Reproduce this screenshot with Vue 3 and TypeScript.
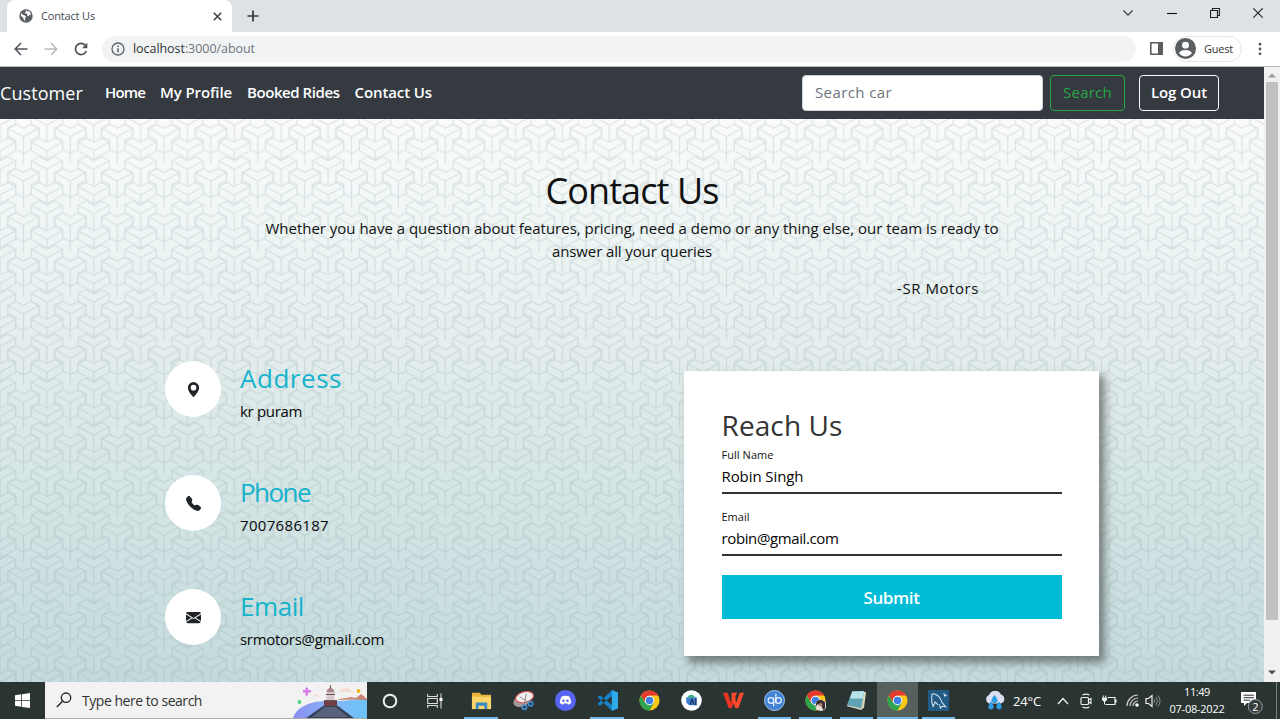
<script setup lang="ts">
import type { Directive } from 'vue'

interface ContactItem {
  title: string
  text: string
  icon: 'pin' | 'phone' | 'mail'
  titleWidth: number
  textWidth: number
}

interface Field {
  label: string
  value: string
  labelWidth: number
  valueWidth: number
}

interface NavLink {
  text: string
  width: number
}

interface TaskApp {
  id: string
  open?: boolean
  active?: boolean
}

// Tracks a label out to its design width, whichever font family is available.
const vFit: Directive<HTMLElement, number> = {
  mounted(el, binding) {
    const natural = el.getBoundingClientRect().width
    const count = (el.textContent ?? '').trim().length
    if (count > 0) el.style.letterSpacing = `${(binding.value - natural) / count}px`
  },
}

const links: NavLink[] = [
  { text: 'Home', width: 40 },
  { text: 'My Profile', width: 72 },
  { text: 'Booked Rides', width: 92.5 },
  { text: 'Contact Us', width: 77.5 },
]

const contacts: ContactItem[] = [
  { title: 'Address', text: 'kr puram', icon: 'pin', titleWidth: 102, textWidth: 62 },
  { title: 'Phone', text: '7007686187', icon: 'phone', titleWidth: 70, textWidth: 89 },
  { title: 'Email', text: 'srmotors@gmail.com', icon: 'mail', titleWidth: 64, textWidth: 144 },
]

const fields: Field[] = [
  { label: 'Full Name', value: 'Robin Singh', labelWidth: 52, valueWidth: 82 },
  { label: 'Email', value: 'robin@gmail.com', labelWidth: 28, valueWidth: 117 },
]

const apps: TaskApp[] = [
  { id: 'explorer', open: true },
  { id: 'snip' },
  { id: 'discord' },
  { id: 'vscode', open: true },
  { id: 'chrome' },
  { id: 'studio' },
  { id: 'wps' },
  { id: 'qb', open: true },
  { id: 'chrome-user', open: true },
  { id: 'notepad', open: true },
  { id: 'chrome', open: true, active: true },
  { id: 'mysql', open: true },
]
</script>

<template>
  <div class="window">
    <header class="tabs">
      <div class="tab">
        <svg class="globe" viewBox="0 0 14 14">
          <circle cx="7" cy="7" r="6.7" fill="#5b5f64" />
          <path d="M2 4.2 4.4 6l1.4.4 1.4 1.3-1.2 1.5.2 2.6-1.4-.9-.5-2L1.8 6.800zM7 1.400l4 1.300.9 3-1.500.3-.6 1.300-1.700-.6L8.600 5.300 7.200 4.600 5.800 4.800z" fill="#fff" />
        </svg>
        <span v-fit="54" class="tab-title">Contact Us</span>
        <svg class="close" viewBox="0 0 8 8"><path d="M.7.7 7.300 7.300M7.300.7.7 7.300" stroke="#3f4347" stroke-width="1.400" /></svg>
      </div>
      <svg class="plus" viewBox="0 0 12 12"><path d="M6 .5v11M.5 6h11" stroke="#33373b" stroke-width="1.700" /></svg>
      <div class="controls">
        <svg width="12" height="8" viewBox="0 0 12 8"><path d="M1.500 1.500 6 6.200l4.500-4.700" fill="none" stroke="#333" stroke-width="1.100" /></svg>
        <svg width="10" height="10" viewBox="0 0 10 10"><path d="M0 5.500h10" stroke="#111" stroke-width="1.100" /></svg>
        <svg width="10" height="10" viewBox="0 0 10 10"><path d="M.5 2.500h7v7h-7zM2.500 2.300V.5h7v7H7.700" fill="none" stroke="#222" stroke-width="1.200" /></svg>
        <svg width="10" height="10" viewBox="0 0 10 10"><path d="m.3.3 9.400 9.400M9.700.3.3 9.700" stroke="#222" stroke-width="1.100" /></svg>
      </div>
    </header>

    <div class="toolbar">
      <svg class="nav-icon" viewBox="0 0 14 14"><path d="M13.500 7H1.500M7 1 1.200 7 7 13" fill="none" stroke="#505459" stroke-width="1.600" /></svg>
      <svg class="nav-icon" viewBox="0 0 14 14"><path d="M.5 7h12M7 1l5.800 6L7 13" fill="none" stroke="#b9bbbe" stroke-width="1.600" /></svg>
      <svg class="nav-icon" viewBox="0 0 14 14">
        <path d="M12.300 9A5.600 5.600 0 1 1 11.300 3.300L12.600 5" fill="none" stroke="#505459" stroke-width="1.700" />
        <path d="M13.300.8v5.400H8z" fill="#505459" />
      </svg>
      <div class="address">
        <svg class="info" viewBox="0 0 14 14"><circle cx="7" cy="7" r="6" fill="none" stroke="#5f6368" stroke-width="1.300" /><path d="M7 6.200v4.200M7 3.500v1.500" stroke="#5f6368" stroke-width="1.500" /></svg>
        <span v-fit="122"><b>localhost</b>:3000/about</span>
      </div>
      <svg class="panel" viewBox="0 0 13 13"><path d="M.8.8h11.400v11.400H.8z" fill="none" stroke="#5a5d61" stroke-width="1.600" /><path d="M8 0h5v13H8z" fill="#5a5d61" /></svg>
      <div class="guest">
        <svg viewBox="0 0 20 20"><circle cx="10" cy="10" r="10" fill="#5a5d62" /><circle cx="10" cy="6.800" r="3.300" fill="#fff" /><path d="M3.800 14.300Q5.500 11.500 10 11.500t6.200 2.800Q14 17.500 10 17.500t-6.200-3.200z" fill="#fff" /></svg>
        <span v-fit="29">Guest</span>
      </div>
      <svg class="dots" viewBox="0 0 4 14"><circle cx="2" cy="2.200" r="1.400" /><circle cx="2" cy="7" r="1.400" /><circle cx="2" cy="11.800" r="1.400" /></svg>
    </div>

    <div class="viewport">
      <div class="page">
        <nav class="navbar">
          <span v-fit="83" class="brand">Customer</span>
          <a v-for="link in links" :key="link.text" v-fit="link.width" class="link">{{ link.text }}</a>
          <div class="search-box"><span v-fit="77">Search car</span></div>
          <button class="btn search"><span v-fit="49">Search</span></button>
          <button class="btn logout"><span v-fit="56">Log Out</span></button>
        </nav>

        <main class="content">
          <svg class="pattern" aria-hidden="true">
            <defs>
              <!-- Long block: three arms meeting at the origin; short block: the same top on a stub. -->
              <g id="top-face">
                <path d="M0 0-15.600-8.500-7.800-12.600 0-8.500 7.800-12.600 15.600-8.500z" />
              </g>
              <g id="long-block">
                <use href="#top-face" />
                <path d="M-15.600-8.500V-.5L-7.800 3.700V14M15.600-8.500V-.5L7.800 3.700V14M0 0V17" />
              </g>
              <g id="short-block">
                <use href="#top-face" />
                <path d="M-15.600-8.500V0L0 8.800 15.600 0V-8.500M0 0V8.800" />
              </g>
              <pattern id="blocks" width="46.870" height="44.300" patternUnits="userSpaceOnUse">
                <g class="lines">
                  <use href="#long-block" x="23.430" y="17.700" />
                  <path d="M23.430 34.300V49M15.630 30.300l7.800 4 7.800-4" />
                  <use href="#long-block" x="23.430" y="62" />
                  <use href="#long-block" x="0" y="6" />
                  <use href="#long-block" x="46.870" y="6" />
                  <use href="#long-block" x="0" y="50.300" />
                  <use href="#long-block" x="46.870" y="50.300" />
                  <use href="#short-block" x="0" y="31.700" />
                  <use href="#short-block" x="46.870" y="31.700" />
                </g>
              </pattern>
            </defs>
            <rect width="100%" height="100%" fill="url(#blocks)" />
          </svg>

          <section class="intro">
            <h1><span v-fit="173">Contact Us</span></h1>
            <p><span v-fit="733">Whether you have a question about features, pricing, need a demo or any thing else, our team is ready to</span></p>
            <p><span v-fit="160">answer all your queries</span></p>
            <p class="sign"><span v-fit="82">-SR Motors</span></p>
          </section>

          <section class="columns">
            <ul class="contacts">
              <li v-for="item in contacts" :key="item.title">
                <span class="disc">
                  <svg v-if="item.icon === 'pin'" viewBox="0 0 16 16"><path fill-rule="evenodd" d="M8 16s6-5.686 6-10A6 6 0 0 0 2 6c0 4.314 6 10 6 10zm0-7a3 3 0 1 1 0-6 3 3 0 0 1 0 6z" /></svg>
                  <svg v-else-if="item.icon === 'phone'" viewBox="0 0 16 16"><path d="M1.885.511a1.745 1.745 0 0 1 2.610.163L6.290 2.980c.329.423.445.974.315 1.494l-.547 2.190a.678.678 0 0 0 .178.643l2.457 2.457a.678.678 0 0 0 .644.178l2.189-.547a1.745 1.745 0 0 1 1.494.315l2.306 1.794c.829.645.905 1.870.163 2.611l-1.034 1.034c-.74.740-1.846 1.065-2.877.702a18.634 18.634 0 0 1-7.010-4.420 18.634 18.634 0 0 1-4.420-7.009c-.362-1.030-.037-2.137.703-2.877z" /></svg>
                  <svg v-else viewBox="0 0 16 16"><path d="M.05 3.555A2 2 0 0 1 2 2h12a2 2 0 0 1 1.950 1.555L8 8.414zM0 4.697v7.104l5.803-3.558zM6.761 8.830l-6.570 4.027A2 2 0 0 0 2 14h12a2 2 0 0 0 1.808-1.144l-6.570-4.027L8 9.586zm3.436-.586L16 11.801V4.697z" /></svg>
                </span>
                <div>
                  <h3><span v-fit="item.titleWidth">{{ item.title }}</span></h3>
                  <p><span v-fit="item.textWidth">{{ item.text }}</span></p>
                </div>
              </li>
            </ul>

            <form class="card" @submit.prevent>
              <h2><span v-fit="121">Reach Us</span></h2>
              <div v-for="field in fields" :key="field.label" class="field">
                <label><span v-fit="field.labelWidth">{{ field.label }}</span></label>
                <div class="value"><span v-fit="field.valueWidth">{{ field.value }}</span></div>
              </div>
              <button class="submit"><span v-fit="56">Submit</span></button>
            </form>
          </section>
        </main>
      </div>

      <div class="scrollbar">
        <svg viewBox="0 0 8 5"><path d="M0 4.500 4 .5l4 4z" fill="#9c9c9c" /></svg>
        <div class="thumb"></div>
        <svg viewBox="0 0 8 5"><path d="M0 .5l4 4 4-4z" fill="#505050" /></svg>
      </div>
    </div>

    <footer class="taskbar">
      <div class="start"><svg viewBox="0 0 16 16"><path d="m0 2.300 6.600-.9v6.200H0zM7.400 1.300 16 0v7.600H7.400zM0 8.400h6.600v6.200L0 13.700zM7.400 8.400H16V16l-8.600-1.200z" fill="#fff" /></svg></div>
      <div class="task-search">
        <svg class="lens" viewBox="0 0 16 16"><circle cx="10" cy="5.700" r="4.700" fill="none" stroke="#222" stroke-width="1.300" /><path d="M6.600 9.200.8 15" stroke="#222" stroke-width="1.400" /></svg>
        <span v-fit="120">Type here to search</span>
        <svg class="art" viewBox="0 0 74 36">
          <defs><linearGradient id="sea"><stop offset="0" stop-color="#8b8df0" /><stop offset=".5" stop-color="#86b5f8" /><stop offset="1" stop-color="#6cc3f5" /></linearGradient></defs>
          <path d="M0 36C5 23 20 19 34 19c18 1 25-2 40-2v19z" fill="url(#sea)" />
          <path d="M44 18q5-2 10-2l4-1 5 1 5-4 6 5v1q-15-1-30 0z" fill="#c98273" />
          <path d="M46 10q1-4 5-3 4-3 6 1 3 0 4 3-7-2-15-1zM20 14q3-4 7 1z" fill="#f6ddd2" />
          <path d="M13 36 30 24h15l16 12z" fill="#38415c" /><path d="m19 35 13-10h11l12 10z" fill="#59627d" />
          <path d="M31 24v-6h13v6z" fill="#703e45" /><path d="M33.500 18V9h8v9z" fill="#d6c9ca" /><path d="M34 10V8l3.500-3L41 8v2z" fill="#a88486" /><path d="M37.500 3v3M31 18.500h13M33 12.500h9" stroke="#71575c" />
          <path d="M12.500 5.500h2.500v2.500h3v2.500h-3v3h-2.500v-3H10V8h2.500z" fill="#d97bea" /><circle cx="6.500" cy="20" r="1.900" fill="#4cd07b" /><circle cx="65.500" cy="9" r="1.900" fill="#f4b40e" />
        </svg>
      </div>
      <div class="cortana"><svg viewBox="0 0 16 16"><circle cx="8" cy="8" r="6.300" fill="none" stroke="#eee" stroke-width="2" /></svg></div>
      <div class="task-view"><svg viewBox="0 0 16 16"><path d="M.7 1v2.500h9.600V1M.7 15v-2.500h9.600V15M.7 5.500h9.600v5H.7zM14 .5v15" fill="none" stroke="#ddd" stroke-width="1.100" /><path d="M12.500 5h3v3h-3z" fill="#fff" /></svg></div>
      <div class="apps">
        <div v-for="(app, i) in apps" :key="i" class="app" :class="{ open: app.open, active: app.active }">
          <svg v-if="app.id === 'explorer'" viewBox="0 0 22 22"><path d="M1 3h8l2 2h10v15H1z" fill="#e8b23b" /><path d="M1 7h20v13H1z" fill="#fcd669" /><path d="M5 20v-7h12v7h-3v-3.500H8V20z" fill="#3c8ac6" /></svg>
          <svg v-else-if="app.id === 'snip'" viewBox="0 0 22 22"><ellipse cx="9" cy="11.500" rx="9" ry="6" fill="#a39a9b" transform="rotate(-20 9 11)" /><ellipse cx="12" cy="7.500" rx="9.500" ry="5.500" fill="#f3eeee" stroke="#d55" stroke-width="1.200" transform="rotate(-15 12 7)" /><path d="m7 7 9 6M14 4l-2 10" stroke="#888" /><circle cx="12" cy="18" r="2.300" fill="none" stroke="#3c8fd0" stroke-width="1.700" /><circle cx="18.500" cy="14.500" r="2.300" fill="none" stroke="#3c8fd0" stroke-width="1.700" /></svg>
          <svg v-else-if="app.id === 'discord'" viewBox="0 0 22 22"><circle cx="11" cy="11" r="11" fill="#5865f2" /><path d="M7 6.700q4-1.200 8 0 2 3.500 2 7-1.500 1.500-3.300 1.700l-.8-1.300h-3.800l-.8 1.300Q6.500 15.200 5 13.700q0-3.500 2-7z" fill="#fff" /><circle cx="8.900" cy="11.200" r="1.300" fill="#5865f2" /><circle cx="13.100" cy="11.200" r="1.300" fill="#5865f2" /></svg>
          <svg v-else-if="app.id === 'vscode'" viewBox="0 0 22 22"><path d="M16 0v6L3 16.500.5 14.500zM16 22v-6L3 5.500.5 7.500z" fill="#1780c6" /><path d="m15.500 0 6.500 2.500v17L15.500 22z" fill="#2fa8ec" /></svg>
          <svg v-else-if="app.id === 'chrome' || app.id === 'chrome-user'" viewBox="0 0 22 22">
            <circle cx="11" cy="11" r="10.500" fill="#fbc816" />
            <path d="M1.900 5.800A10.500 10.500 0 0 1 20.100 5.800H11L6.500 13.600z" fill="#e33b2e" />
            <path d="M1.900 5.800A10.500 10.500 0 0 0 11 21.500l4.500-7.900H6.500z" fill="#2da44e" />
            <circle cx="11" cy="11" r="5" fill="#fff" /><circle cx="11" cy="11" r="4" fill="#3f7fe8" />
            <g v-if="app.id === 'chrome-user'"><circle cx="16.500" cy="16" r="6" fill="#e5ded9" /><path d="M12 12q5-4 9 1v6l-2 2-2-5-4-1-2 3z" fill="#392c2b" /><circle cx="16.500" cy="15.500" r="1.800" fill="#b9836e" /></g>
          </svg>
          <svg v-else-if="app.id === 'studio'" viewBox="0 0 22 22"><circle cx="11" cy="11" r="10.800" fill="#fff" /><path d="M5.500 7.500h11V16h-8l-3-3z" fill="#3c7fd2" /><path d="M6.500 7.500q4-5 8.500 0" fill="#34b276" /><path d="m9.500 15.500 2-6 2 6M15.500 9v7" fill="none" stroke="#1b3553" stroke-width="1.200" /></svg>
          <svg v-else-if="app.id === 'wps'" viewBox="0 0 22 22"><path d="M0 3h5l3 10 2-6h4l-5 12H6z" fill="#e93323" /><path d="M9 3h6l-3 5 2 5 3.500-10H22l-6 16h-3L9 9z" fill="#ff4a2e" /></svg>
          <svg v-else-if="app.id === 'qb'" viewBox="0 0 22 22"><circle cx="11" cy="11" r="10.500" fill="#4283d6" stroke="#a8caef" /><circle cx="7.200" cy="11" r="2.900" fill="none" stroke="#e7f1ff" stroke-width="1.300" /><path d="M10.100 8v9M12.400 4v10" stroke="#e7f1ff" stroke-width="1.300" /><circle cx="15.100" cy="11" r="2.900" fill="none" stroke="#e7f1ff" stroke-width="1.300" /></svg>
          <svg v-else-if="app.id === 'notepad'" viewBox="0 0 22 22"><path d="m7 1.500 14 .5-2 16-3 3-15-4z" fill="#d6d2bd" /><path d="M6.500 1.500 19 1l-3 18L1 16z" fill="#5fa3b3" /><path d="M6.500 1.500 19 1l-1.500 8L4 9z" fill="#b9e3e8" /></svg>
          <svg v-else viewBox="0 0 22 22"><path d="M0 0h22v22H0z" fill="#225b86" /><path d="M5.500 18 4 13V6q0-3 3.500-1.500Q13 6.500 14.500 13l4 4.500-3.500-.5-2 2-1-4M5.500 17l2-4.500 3 3" fill="none" stroke="#d7e5ef" stroke-width="1.100" /><path d="m16 3 4 3-3 1z" fill="#d7e5ef" /></svg>
        </div>
      </div>
      <div class="tray">
        <svg class="weather" viewBox="0 0 22 20"><path d="M5 12.500a4.600 4.600 0 0 1 0-8.500A6.500 6.500 0 0 1 17 3.500a4.700 4.700 0 0 1 0 9z" fill="#dcdff3" /><path d="M10.500 4.500q-5.500 7 0 7t0-7zM7 11q-4.500 7 0 7t0-7zM15 11q-4.500 7 0 7t0-7z" fill="#2f9fe4" stroke="#2f9fe4" /></svg>
        <span v-fit="28" class="temp">24°C</span>
        <svg class="chev" viewBox="0 0 12 8"><path d="M1 7 6 1.500 11 7" fill="none" stroke="#eee" stroke-width="1.300" /></svg>
        <svg class="meet" viewBox="0 0 12 16"><rect x="1" y="4.500" width="7.500" height="7" rx="1" fill="none" stroke="#eee" stroke-width="1.200" /><path d="m8.500 7 2.500-1.500v5L8.500 9M2.500 2Q6 .3 9.500 2M2.500 14q3.500 1.700 7 0" fill="none" stroke="#eee" stroke-width="1.100" /></svg>
        <svg class="battery" viewBox="0 0 16 12"><path d="M6.500 2.500H14v7H4.500M15 4.500v3" fill="none" stroke="#eee" stroke-width="1.200" /><path d="M1 2.500h5V5L4.500 6.500h-2L1 5z" fill="#eee" /><path d="M2.300.5v2M4.700.5v2M3.500 6v3.500" fill="none" stroke="#eee" /></svg>
        <svg class="wifi" viewBox="0 0 13 13"><path d="M1 12A11 11 0 0 1 12 1M4 12a8 8 0 0 1 8-8M7 12a5 5 0 0 1 5-5" fill="none" stroke="#ccc" stroke-width="1.200" /><circle cx="11" cy="11" r="1.800" fill="#fff" /></svg>
        <svg class="sound" viewBox="0 0 16 14"><path d="M1 4.500h2.500L7 1.500v11L3.500 9.500H1z" fill="none" stroke="#eee" stroke-width="1.200" /><path d="M9 5q1.500 2 0 4M11 3q3 4 0 8M13 1.500q4 5.500 0 11" fill="none" stroke="#84908e" /></svg>
        <div class="clock"><span v-fit="26">11:49</span><span v-fit="55">07-08-2022</span></div>
        <svg class="notice" viewBox="0 0 24 24"><path d="M1 1h15v11H7l-3 3v-3H1z" fill="#fff" /><path d="M3.500 4.200H14M3.500 6.700H14M3.500 9.200H10" stroke="#2a3533" /><circle cx="15.300" cy="15.500" r="7" fill="#343d3c" stroke="#979d9c" /><text x="15.300" y="19.500" text-anchor="middle" fill="#fff" font-size="11">2</text></svg>
      </div>
    </footer>
  </div>
</template>

<style>
html,
body {
  margin: 0;
  overflow: hidden;
}
</style>

<style scoped>
.window {
  width: 1280px;
  height: 719px;
  display: flex;
  flex-direction: column;
  font-family: "Open Sans", "Noto Sans", sans-serif;
  overflow: hidden;
}
.window * { box-sizing: border-box; }
svg { display: block; flex: none; }
h1, h2, h3, p, ul { margin: 0; padding: 0; font-weight: 400; }
button { font-family: inherit; padding: 0; }
span { display: inline-block; white-space: nowrap; }

.tabs { height: 32px; flex: none; background: #dee1e6; display: flex; align-items: center; padding-left: 7px; }
.tab { width: 225px; height: 32px; background: #fff; border-radius: 8px 8px 0 0; display: flex; align-items: center; padding: 0 10px 0 12px; }
.globe { width: 14px; height: 14px; margin-right: 8px; }
.tab-title { font-size: 11px; line-height: 14px; margin-top: -1px; color: #45494d; }
.close { width: 9px; height: 9px; margin-left: auto; }
.plus { width: 12px; height: 12px; margin-left: 15px; }
.controls { margin-left: auto; display: flex; align-items: center; gap: 33px; padding: 0 17px 6px 0; }
.toolbar { height: 35px; flex: none; display: flex; align-items: center; background: #fff; border-bottom: 1px solid #b8bcbe; padding: 0 18px 1px 14px; }
.nav-icon { width: 14px; height: 14px; margin-right: 16px; }
.nav-icon:nth-child(3) { margin-right: 14px; }
.address { width: 1034px; height: 26px; border-radius: 13px; background: #f1f3f4; display: flex; align-items: center; padding-left: 9px; font-size: 12.5px; color: #70757a; }
.address b { font-weight: 400; color: #303337; }
.info { width: 14px; height: 14px; margin-right: 8px; }
.panel { width: 13px; height: 13px; margin-left: 14px; }
.guest { width: 69px; height: 26px; margin-left: 10px; border: 1px solid #e3e5e7; border-radius: 13px; display: flex; align-items: center; gap: 8px; padding-left: 1px; font-size: 11px; color: #333; }
.guest span { line-height: 14px; }
.guest svg { width: 21px; height: 21px; }
.dots { width: 4px; height: 14px; margin-left: auto; fill: #55595d; }

.viewport { height: 615px; flex: none; display: flex; }
.page { width: 1264px; display: flex; flex-direction: column; }
.navbar { height: 52px; flex: none; background: #343a40; display: flex; align-items: center; color: #fff; font-size: 15px; font-weight: 600; padding-right: 45px; line-height: 20px; }
.brand { font-size: 18px; font-weight: 500; margin-right: 22px; }
.link { white-space: nowrap; margin-right: 15px; margin-top: -2px; }
.search-box { width: 241px; height: 36px; margin-left: auto; margin-right: 7px; border: 1px solid #ced4da; border-radius: 4px; background: #fff; color: #6c757d; font-weight: 400; display: flex; align-items: center; padding-left: 12px; }
.search-box span { margin-top: -2px; }
.btn { height: 36px; border-radius: 4px; background: transparent; font-size: 15px; font-weight: 600; line-height: 20px; padding-bottom: 2px; }
.search { width: 75px; border: 1px solid #28a745; color: #28a745; font-weight: 500; }
.logout { width: 80px; margin-left: 14px; border: 1px solid #f8f9fa; color: #fff; }

.content { position: relative; flex: 1; overflow: hidden; background: linear-gradient(#fafafa 0%, #f3f8f8 12%, #dfebea 48%, #c3dadc 100%); }
.pattern { position: absolute; inset: 0; width: 100%; height: 100%; }
.lines { fill: none; stroke: #7f9696; opacity: .22; stroke-width: 1.2; }
.intro { position: relative; padding-top: 49px; text-align: center; color: #111; }
.intro h1 { font-size: 36px; line-height: 46px; height: 49px; }
.intro p { font-size: 15px; line-height: 23px; height: 23px; }
.intro .sign { margin-top: 14px; padding-right: 285px; text-align: right; }
.columns { position: relative; display: flex; padding: 61px 165px 0; justify-content: space-between; }
.contacts { list-style: none; }
.contacts li { display: flex; height: 114px; gap: 19px; }
.disc { width: 56px; height: 56px; border-radius: 50%; background: #fff; display: flex; align-items: center; justify-content: center; }
.disc svg { width: 15px; height: 15px; fill: #212529; }
.contacts h3 { font-size: 26px; line-height: 34px; height: 39px; color: #16b3cd; }
.contacts p { font-size: 15px; line-height: 23px; color: #080808; }
.contacts h3 span, .contacts p span { vertical-align: top; }
.card { width: 415px; height: 285px; margin-top: 10px; padding: 37px 37.5px; background: #fff; box-shadow: 5px 6px 8px 1px rgba(70, 70, 70, .6); }
.card h2 { font-size: 28px; line-height: 35px; height: 39px; color: #333; }
.field { height: 62px; }
.field label { display: block; height: 16px; font-size: 11px; line-height: 16px; color: #111; }
.field span { vertical-align: top; }
.value { height: 31px; border-bottom: 2px solid #303336; font-size: 15px; line-height: 26px; color: #050505; }
.submit { display: block; width: 340px; height: 44px; margin-top: 4px; border: 0; background: #00bcd7; color: #fff; font-size: 17px; font-weight: 600; }

.scrollbar { width: 16px; background: #f1f1f1; display: flex; flex-direction: column; align-items: center; padding: 6px 0; }
.scrollbar svg { width: 8px; height: 5px; }
.thumb { width: 12px; height: 538px; margin: 4px 0 50px; background: #c1c1c1; }

.taskbar { height: 37px; flex: none; background: #2a3533; display: flex; align-items: stretch; color: #fff; }
.start { width: 45px; display: flex; align-items: center; justify-content: center; }
.start svg { width: 15px; height: 15px; }
.task-search { width: 322px; background: #f2f2f2; border-bottom: 1px solid #aaa; display: flex; align-items: center; padding-left: 11px; color: #333; font-size: 14px; }
.lens { width: 16px; height: 16px; margin-right: 10px; }
.art { width: 74px; height: 36px; margin-left: auto; }
.cortana { width: 46px; display: flex; align-items: center; justify-content: center; }
.task-view { width: 47px; display: flex; align-items: center; padding-left: 14px; }
.cortana svg, .task-view svg { width: 16px; height: 16px; }
.apps { width: 500px; display: flex; }
.app { flex: 0 0 42px; display: flex; align-items: center; justify-content: center; border: solid transparent; border-width: 0 4px; }
.app:nth-child(n + 8) { flex-basis: 41px; }
.app svg { width: 21px; height: 21px; }
.app.open { background: linear-gradient(#76b9ed, #76b9ed) bottom / 100% 2px no-repeat padding-box; }
.app.active { border-width: 0; background: linear-gradient(#76b9ed, #76b9ed) bottom / 100% 2px no-repeat, #56605e; }
.tray { flex: 1; display: flex; align-items: center; padding-left: 24px; margin-right: 3px; border-right: 1px solid #78817f; }
.weather { width: 22px; height: 20px; }
.temp { font-size: 13px; margin-left: 7px; }
.chev { width: 12px; height: 8px; margin-left: 16px; }
.meet { width: 12px; height: 16px; margin-left: 11px; }
.battery { width: 16px; height: 12px; margin-left: 9px; }
.wifi { width: 13px; height: 13px; margin-left: 9px; }
.sound { width: 16px; height: 14px; margin-left: 6px; }
.clock { width: 56px; margin-left: 8px; margin-top: -2px; display: flex; flex-direction: column; align-items: center; font-size: 11px; line-height: 17px; }
.notice { width: 24px; height: 24px; margin-left: 15px; margin-top: 4px; }
</style>
